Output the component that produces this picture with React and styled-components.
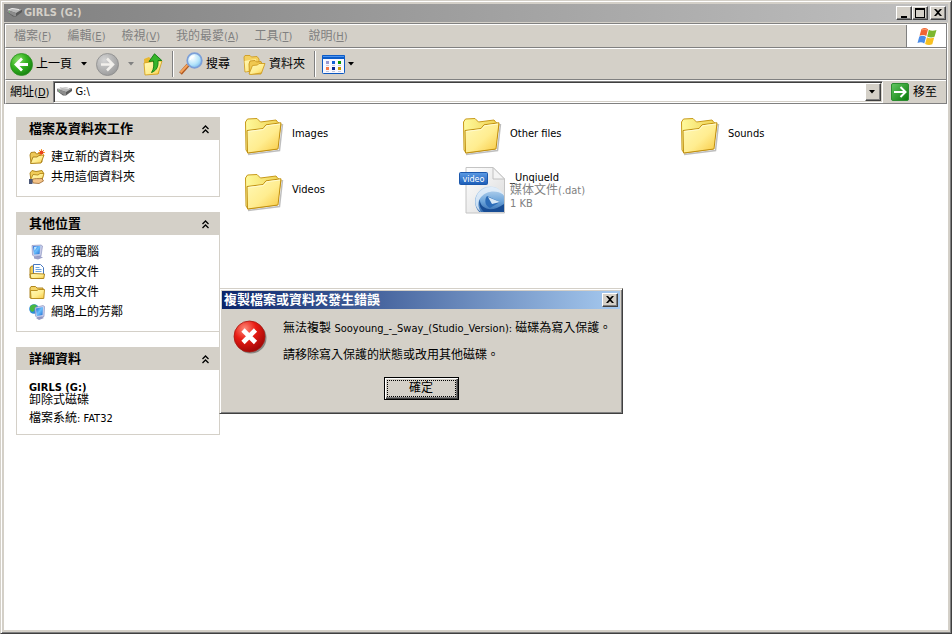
import React from 'react';
import styled, { createGlobalStyle, css } from 'styled-components';

const menus = [
  ['檔案', 'F'],
  ['編輯', 'E'],
  ['檢視', 'V'],
  ['我的最愛', 'A'],
  ['工具', 'T'],
  ['說明', 'H'],
];

const folders = ['Images', 'Other files', 'Sounds', 'Videos'];

const App = () => {
  return (
    <>
      <GlobalStyle />
      <Gradients />
      <Window lang="zh-Hant">
        <TitleBar>
          <DriveIcon />
          <WindowTitle>GIRLS (G:)</WindowTitle>
          <CaptionButtons>
            <CaptionButton aria-label="Minimize">
              <CaptionGlyph d="M3 9h6v2H3z" />
            </CaptionButton>
            <CaptionButton aria-label="Maximize">
              <CaptionGlyph d="M1 1h10v10H1zM2 3v7h8V3z" />
            </CaptionButton>
            <CaptionButton aria-label="Close" $spaced>
              <CaptionGlyph d={CROSS} />
            </CaptionButton>
          </CaptionButtons>
        </TitleBar>

        <Bars>
          <MenuRow>
            <Menu>
              {menus.map(([name, key]) => (
                <MenuButton key={key}>
                  {name}
                  <Latin>
                    (<u>{key}</u>)
                  </Latin>
                </MenuButton>
              ))}
            </Menu>
            <Brand>
              <FlagIcon />
            </Brand>
          </MenuRow>

          <ToolRow>
            <ToolButton>
              <BackIcon />
              上一頁
            </ToolButton>
            <DropButton aria-label="Back history">
              <DropArrow />
            </DropButton>
            <ToolButton aria-label="Forward">
              <ForwardIcon />
            </ToolButton>
            <DropButton aria-label="Forward history" $muted>
              <DropArrow />
            </DropButton>
            <ToolButton aria-label="Up">
              <UpIcon />
            </ToolButton>
            <Separator />
            <ToolButton>
              <SearchIcon />
              搜尋
            </ToolButton>
            <ToolButton $wide>
              <FoldersIcon />
              資料夾
            </ToolButton>
            <Separator />
            <ToolButton aria-label="Views">
              <ViewsIcon />
              <DropArrow />
            </ToolButton>
          </ToolRow>

          <AddressRow>
            <AddressLabel htmlFor="address">
              網址
              <Latin>
                (<u>D</u>)
              </Latin>
            </AddressLabel>
            <Combo>
              <DriveIcon />
              <AddressInput id="address" defaultValue="G:\" />
              <ComboButton aria-label="Address list">
                <DropArrow />
              </ComboButton>
            </Combo>
            <GoButton>
              <GoIcon />
              移至
            </GoButton>
          </AddressRow>
        </Bars>

        <Content>
          <Sidebar>
            <Panel title="檔案及資料夾工作">
              <Task icon={<NewFolderIcon />}>建立新的資料夾</Task>
              <Task icon={<ShareFolderIcon />}>共用這個資料夾</Task>
            </Panel>
            <Panel title="其他位置">
              <Task icon={<ComputerIcon />}>我的電腦</Task>
              <Task icon={<DocumentsIcon />}>我的文件</Task>
              <Task icon={<SmallFolderIcon />}>共用文件</Task>
              <Task icon={<NetworkIcon />}>網路上的芳鄰</Task>
            </Panel>
            <Panel title="詳細資料">
              <Details>
                <DriveName>GIRLS (G:)</DriveName>
                <DetailLine>卸除式磁碟</DetailLine>
                <DetailLine $spaced>
                  檔案系統<Latin>: FAT32</Latin>
                </DetailLine>
              </Details>
            </Panel>
          </Sidebar>

          <Files>
            {folders.map((name) => (
              <Tile key={name}>
                <FolderIcon />
                <FileName>{name}</FileName>
              </Tile>
            ))}
            <Tile>
              <VideoIcon />
              <FileInfo>
                <FileName>_UnqiueId</FileName>
                <FileMeta>
                  媒体文件<Latin>(.dat)</Latin>
                </FileMeta>
                <FileMeta>
                  <Latin>1 KB</Latin>
                </FileMeta>
              </FileInfo>
            </Tile>
          </Files>
        </Content>

        <Dialog role="alertdialog" aria-labelledby="dialog-title">
          <DialogTitleBar>
            <DialogTitle id="dialog-title">複製檔案或資料夾發生錯誤</DialogTitle>
            <CaptionButton aria-label="Close">
              <CaptionGlyph d={CROSS} />
            </CaptionButton>
          </DialogTitleBar>
          <DialogBody>
            <ErrorIcon />
            <Message>
              <p>
                無法複製 <Latin>Sooyoung_-_Sway_(Studio_Version): </Latin>
                磁碟為寫入保護。
              </p>
              <p>請移除寫入保護的狀態或改用其他磁碟。</p>
            </Message>
          </DialogBody>
          <DialogActions>
            <OkButton>
              <span>確定</span>
            </OkButton>
          </DialogActions>
        </Dialog>
      </Window>
    </>
  );
};

export default App;

const Panel = ({ title, children }) => (
  <PanelBox>
    <PanelHeader>
      {title}
      <svg width="9" height="9" viewBox="0 0 9 9" fill="none" stroke="#000">
        <path d="M1.5 4L4.5 1L7.5 4M1.5 8L4.5 5L7.5 8" strokeWidth="1.3" />
      </svg>
    </PanelHeader>
    <PanelBody>{children}</PanelBody>
  </PanelBox>
);

const Task = ({ icon, children }) => (
  <TaskLink href="#">
    {icon}
    {children}
  </TaskLink>
);

/* icons */

const CROSS = 'M2 2h2l2 2 2-2h2L7 5.500 10 9H8L6 7 4 9H2l3-3.500z';

const CaptionGlyph = ({ d }) => (
  <svg width="12" height="12" viewBox="0 0 12 12">
    <path d={d} fill="#000" fillRule="evenodd" />
  </svg>
);

const DropArrow = () => (
  <svg width="7" height="4" viewBox="0 0 7 4">
    <path d="M0 0h6L3 3.5z" fill="currentColor" />
  </svg>
);

const Gradients = () => (
  <HiddenSvg aria-hidden="true">
    <defs>
      <linearGradient id="folder" x1="0" y1="0" x2="1" y2="1">
        <stop offset="0" stopColor="#fff9b8" />
        <stop offset="0.55" stopColor="#ffed90" />
        <stop offset="1" stopColor="#f8c840" />
      </linearGradient>
      <linearGradient id="folderBack" x1="0" y1="0" x2="1" y2="0">
        <stop offset="0" stopColor="#fffa9c" />
        <stop offset="1" stopColor="#eed050" />
      </linearGradient>
      <radialGradient id="green" cx="0.35" cy="0.3" r="0.75">
        <stop offset="0" stopColor="#8be06a" />
        <stop offset="0.5" stopColor="#35b321" />
        <stop offset="1" stopColor="#158010" />
      </radialGradient>
      <radialGradient id="grey" cx="0.35" cy="0.3" r="0.8">
        <stop offset="0" stopColor="#d4d4d4" />
        <stop offset="1" stopColor="#979797" />
      </radialGradient>
      <radialGradient id="red" cx="0.35" cy="0.25" r="0.8">
        <stop offset="0" stopColor="#ff8a78" />
        <stop offset="0.45" stopColor="#e81c14" />
        <stop offset="1" stopColor="#9c0606" />
      </radialGradient>
      <radialGradient id="lens" cx="0.35" cy="0.3" r="0.8">
        <stop offset="0" stopColor="#ffffff" />
        <stop offset="0.6" stopColor="#b4e4fa" />
        <stop offset="1" stopColor="#6cb4ec" />
      </radialGradient>
      <linearGradient id="screen" x1="0" y1="0" x2="1" y2="1">
        <stop offset="0" stopColor="#1c64dc" />
        <stop offset="0.5" stopColor="#6cc0fc" />
        <stop offset="1" stopColor="#1c68d0" />
      </linearGradient>
      <linearGradient id="page" x1="0" y1="0" x2="1" y2="1">
        <stop offset="0" stopColor="#ffffff" />
        <stop offset="1" stopColor="#dadada" />
      </linearGradient>
      <linearGradient id="orb" x1="0" y1="0" x2="0" y2="1">
        <stop offset="0" stopColor="#c4dcf2" />
        <stop offset="0.5" stopColor="#6ca4da" />
        <stop offset="1" stopColor="#1c549c" />
      </linearGradient>
      <linearGradient id="tag" x1="0" y1="0" x2="0" y2="1">
        <stop offset="0" stopColor="#5c9be4" />
        <stop offset="1" stopColor="#1b5db8" />
      </linearGradient>
      <linearGradient id="go" x1="0" y1="0" x2="1" y2="1">
        <stop offset="0" stopColor="#62c862" />
        <stop offset="1" stopColor="#087808" />
      </linearGradient>
    </defs>
  </HiddenSvg>
);

const DriveIcon = () => (
  <svg width="16" height="16" viewBox="0 0 16 16">
    <path d="M1 5L6 3L16 4.500V7L10 11.500L7 11.500L1 7z" fill="#5a5a5a" />
    <path d="M1 5L6 3L16 4.500L10 8z" fill="#b8b8b8" />
    <path d="M1 5L10 8V11H8L1 7z" fill="#8c8c8c" />
    <path d="M2 5L6 3.500L13 4.500" stroke="#e8e8e8" fill="none" />
    <path d="M3 7h1" stroke="#6ad06a" />
  </svg>
);

const FlagIcon = () => (
  <svg width="20" height="19" viewBox="0 0 20 19">
    <path d="M4.500 2C7 .5 9 1 11 2.300L9.300 9C7.500 7.800 5 7.600 2.500 8.800z" fill="#f06432" />
    <path d="M11.800 2.800C14 4 16.500 4 19.500 3L17.500 9.700C15 10.700 12.500 10.600 10.200 9.400z" fill="#7cb82e" />
    <path d="M2.300 9.600C4.500 8.400 7 8.600 9 9.900L7.300 16.500C5.200 15 3 15 .5 16z" fill="#4a8ce8" />
    <path d="M9.900 10.300C12 11.500 14.500 11.700 17.200 10.600L15.300 17.200C12.800 18.300 10.300 18 8.100 16.900z" fill="#f8c020" />
    <path d="M5 3C7 2 8.500 2.300 10 3" stroke="#f8a070" fill="none" />
  </svg>
);

const BackIcon = () => (
  <svg width="23" height="23" viewBox="0 0 23 23">
    <circle cx="11.500" cy="11.500" r="11" fill="url(#green)" stroke="#2c8f20" strokeWidth="0.8" />
    <path d="M12 5.500L6 11.500L12 17.500M6.500 11.500H18" stroke="#fff" strokeWidth="2.800" fill="none" />
  </svg>
);

const ForwardIcon = () => (
  <svg width="23" height="23" viewBox="0 0 23 23">
    <circle cx="11.500" cy="11.500" r="11" fill="url(#grey)" stroke="#8a8a8a" strokeWidth="0.8" />
    <path d="M11 5.500L17 11.500L11 17.500M16.500 11.500H5" stroke="#f2f0ec" strokeWidth="2.500" fill="none" />
  </svg>
);

const UpIcon = () => (
  <svg width="20" height="23" viewBox="0 0 20 23">
    <path d="M1 6L6 4L8 6L17 8L16 21L2 22z" fill="#e8b830" />
    <path d="M1 10L13 8L19 8L15 21L2 22z" fill="url(#folder)" stroke="#d09c18" strokeWidth="0.8" />
    <path d="M11.500 .8L18.800 7.500H15C15.500 13 14 17.500 8.500 19.500C11 16 11 12 10.500 8L6 8.500z" fill="#36b52a" stroke="#127a10" strokeWidth="0.9" />
  </svg>
);

const SearchIcon = () => (
  <svg width="24" height="24" viewBox="0 0 24 24">
    <path d="M9 13L1.500 21.500" stroke="#b05820" strokeWidth="3.600" />
    <path d="M8.500 13L1.500 20.500" stroke="#f4a45c" strokeWidth="2" />
    <circle cx="15.500" cy="8.500" r="7.300" fill="url(#lens)" stroke="#7c9fd8" strokeWidth="1.700" />
    <path d="M11 8C11.500 5.500 13 4.200 15.500 4" stroke="#fff" strokeWidth="1.500" fill="none" />
  </svg>
);

const FoldersIcon = () => (
  <svg width="23" height="21" viewBox="0 0 23 21">
    <path d="M1 3L2 1.500H7L8.500 3L14 2.500L16 5V16L2 18z" fill="#f4d060" stroke="#cf9c20" strokeWidth="0.900" />
    <path d="M1.500 7L13 5L12 16L2.500 17.500z" fill="url(#folder)" />
    <path d="M6 10L7 7L12 6.500L13.500 8L18 7.500L19 10L18 20H6.500z" fill="#f0c850" stroke="#c89420" strokeWidth="0.900" />
    <path d="M6 20L9.500 11.500L14.500 11L16 9.500H22L18.500 19L8 20.500z" fill="url(#folder)" stroke="#cf9c20" strokeWidth="0.900" />
  </svg>
);

const ViewsIcon = () => (
  <svg width="24" height="19" viewBox="-1 0 24 19">
    <rect x="0.500" y="0.500" width="22" height="18" rx="1" fill="#f8f8ff" stroke="#0c58c0" />
    <rect x="0" y="0" width="23" height="4" rx="1" fill="#0c5cc8" />
    <rect x="1" y="1" width="21" height="1" fill="#4c94f0" />
    <path d="M4 6h3v3h-3z" fill="#9898d0" />
    <path d="M10 6h3v3h-3z" fill="#1060d8" />
    <path d="M16 6h3v3h-3z" fill="#089808" />
    <path d="M4 12h3v3h-3z" fill="#f87848" />
    <path d="M10 12h3v3h-3z" fill="#082890" />
    <path d="M16 12h3v3h-3z" fill="#c89808" />
    <path d="M4 10.500h3M10 10.500h3M16 10.500h3M4 16.500h3M10 16.500h3M16 16.500h3" stroke="#c8c8d8" />
  </svg>
);

const GoIcon = () => (
  <svg width="18" height="18" viewBox="0 0 18 18">
    <rect x="0.500" y="0.500" width="17" height="17" rx="1.500" fill="url(#go)" stroke="#2c8c30" />
    <path d="M9.500 4L14.500 9L9.500 14M14 9H3" stroke="#fff" strokeWidth="2" fill="none" />
  </svg>
);

const SmallFolderIcon = () => (
  <svg width="16" height="16" viewBox="0 0 16 16">
    <path d="M1 4L2 2.500H6.500L8 4H14V14H1z" fill="#f4d468" stroke="#a87c10" strokeWidth="0.900" />
    <path d="M1.500 6.500H8L9.500 5.500H15.500L14.800 14.500H2z" fill="url(#folder)" stroke="#b48818" strokeWidth="0.900" />
  </svg>
);

const NewFolderIcon = () => (
  <svg width="16" height="16" viewBox="0 0 16 16">
    <path d="M1 6L2 3.500L6 3L7.500 5L12 4L13 13L2 14z" fill="#eec858" stroke="#a87c10" strokeWidth="0.900" />
    <path d="M1.500 14.500L4 8H8L10 6.500L15 6L12 14z" fill="url(#folder)" stroke="#a87c10" strokeWidth="0.900" />
    <path d="M12.500 0v7M9 3.500h7M10 1l5 5M15 1l-5 5" stroke="#f8a038" />
    <circle cx="12.500" cy="3.500" r="2" fill="#e8401c" />
  </svg>
);

const ShareFolderIcon = () => (
  <svg width="16" height="16" viewBox="0 0 16 16">
    <path d="M1 4L3 1.500L7 2.500L13 1.500L14.500 4L13 12H2z" fill="#f0cc58" stroke="#a87c10" strokeWidth="0.900" />
    <path d="M2 10L4 5.500L9 6L11 4.500H15L12.500 12L3 12z" fill="url(#folder)" stroke="#b48818" strokeWidth="0.900" />
    <path d="M3 10.500C6 9 9 10 13 9.500L14.500 12L10 14.500L4 14z" fill="#f4c488" stroke="#9c6830" strokeWidth="0.800" />
    <path d="M0 10h3.500v5H0z" fill="#4c5878" />
  </svg>
);

const ComputerIcon = () => (
  <svg width="16" height="16" viewBox="0 0 16 16">
    <path d="M5 13L10 11.500L14 13.500L9 15.500L5 14.500z" fill="#9ca0c8" />
    <path d="M3 1.500L12 1L13.500 2L12 12L5 12.500L3.500 11z" fill="#c8cce8" stroke="#8088b8" strokeWidth="0.600" />
    <path d="M4 2.300L11.300 2L10.500 10L5 10.500z" fill="url(#screen)" />
    <path d="M5 3l3-.2-2.500 4z" fill="#c0e8ff" />
  </svg>
);

const DocumentsIcon = () => (
  <svg width="16" height="16" viewBox="0 0 16 16">
    <path d="M1 4L2.500 2H5V14H1z" fill="#f0cc58" stroke="#a87c10" strokeWidth="0.900" />
    <path d="M4.500 .5H11.500L14.500 3.500V12H4.500z" fill="#fff" stroke="#4878c0" />
    <path d="M6.500 3.500h4M6.500 5.500h6M6.500 7.500h6" stroke="#6ca4e0" />
    <path d="M1 10L4 9.500L15.500 10L14.800 14.500H2z" fill="url(#folder)" stroke="#a87c10" strokeWidth="0.900" />
  </svg>
);

const NetworkIcon = () => (
  <svg width="16" height="16" viewBox="0 0 16 16">
    <circle cx="5" cy="5" r="4.800" fill="#2c8cd8" />
    <path d="M1 3C3 0 6 0 8 2L6 4L5 7L3 8L1 6z" fill="#48b840" />
    <path d="M7 14L12 12L15 14L10 16z" fill="#9498c4" />
    <path d="M6 3.500L14 1.500L15.600 2.500L15 12.500L8 13.500L6.500 12z" fill="#ccd0ec" stroke="#8088b8" strokeWidth="0.600" />
    <path d="M7 4.500L14 3L13.500 11L7.800 12z" fill="url(#screen)" />
  </svg>
);

const FolderIcon = () => (
  <svg width="48" height="48" viewBox="0 0 48 48">
    <path d="M9 44.500L40.500 40.500L43.500 14" fill="none" stroke="#888" strokeWidth="1.500" opacity="0.550" />
    <path d="M6.500 12L8.500 9L18 8.500L21.500 12L37 10L39 12.500L42 14L38 39L9 43L7 40z" fill="url(#folderBack)" stroke="#c89a1c" />
    <path d="M8 20.500L24 18.500L27 14.800L42 12.800L39 39L8.500 43z" fill="url(#folder)" stroke="#c08f10" />
    <path d="M9 21.500L24.500 19.500L27.500 15.800L41 14" fill="none" stroke="#fffbd0" />
  </svg>
);

const VideoIcon = () => (
  <svg width="48" height="48" viewBox="0 0 48 48">
    <path d="M9 1.500H36L47.500 13V47H9z" fill="url(#page)" stroke="#c4c4c4" />
    <path d="M36 1.500V13H47.500z" fill="#f4f4f4" stroke="#c0c0c0" />
    <clipPath id="sheet">
      <path d="M9 2H47V46H9z" />
    </clipPath>
    <g clipPath="url(#sheet)">
      <circle cx="33" cy="35.500" r="15" fill="url(#orb)" />
      <path d="M20 29C26 19 41 18 47 29C39 23 29 25 24 31C20 36 21 41 24 46C18 42 17 35 20 29z" fill="#eaf3fb" opacity="0.800" />
      <path d="M30 30L43 36L33 42C28 40 27 34 30 30z" fill="#2c6cb8" />
      <path d="M31 31L43 36L35 38z" fill="#d8e8f6" />
      <path d="M23 33C22 42 34 48 47 38V47H28C23 43 21 38 23 33z" fill="#174c94" />
    </g>
    <rect x="2.500" y="6.500" width="28" height="12" rx="1" fill="url(#tag)" stroke="#1c58ac" />
    <text x="16.500" y="16" fill="#fff" fontSize="9" textAnchor="middle">
      video
    </text>
  </svg>
);

const ErrorIcon = () => (
  <svg width="34" height="34" viewBox="0 0 34 34">
    <circle cx="18" cy="18" r="15.500" fill="#555" opacity="0.600" />
    <circle cx="16.500" cy="16.500" r="15.500" fill="url(#red)" stroke="#a81810" strokeWidth="0.800" />
    <path d="M10 10L22.500 22.500M22.500 10L10 22.500" stroke="#fff" strokeWidth="4.600" />
  </svg>
);

/* styles */

const GlobalStyle = createGlobalStyle`
  * {
    box-sizing: border-box;
  }
  body {
    margin: 0;
    color: #000;
    font: 12px/16px "DejaVu Sans Condensed", "Noto Sans CJK TC", sans-serif;
  }
  button, input {
    margin: 0;
    padding: 0;
    border: 0;
    color: inherit;
    background: none;
    font: inherit;
  }
  p {
    margin: 0;
  }
  svg {
    flex: none;
    display: block;
  }
`;

const raised = css`
  border: 1px solid;
  border-color: #fff #404040 #404040 #fff;
  box-shadow: inset -1px -1px #808080;
  background: #d4d0c8;
`;

const frame = css`
  border: 1px solid;
  border-color: #d4d0c8 #404040 #404040 #d4d0c8;
  box-shadow: inset 1px 1px #fff, inset -1px -1px #808080;
  background: #d4d0c8;
`;

const HiddenSvg = styled.svg`
  position: absolute;
  width: 0;
  height: 0;
`;

const Latin = styled.span`
  font-size: 11px;
  white-space: pre;
`;

const Window = styled.div`
  ${frame}
  position: relative;
  min-height: 100vh;
  padding: 3px;
  display: flex;
  flex-direction: column;
`;

const TitleBar = styled.header`
  height: 18px;
  padding: 0 2px;
  display: flex;
  align-items: center;
  gap: 2px;
  color: #d4d0c8;
  background: linear-gradient(to right, #808080, #c0c0c0);
`;

const WindowTitle = styled.h1`
  flex: 1;
  margin: 0;
  font-size: 11px;
  font-weight: bold;
`;

const CaptionButtons = styled.div`
  display: flex;
`;

const CaptionButton = styled.button`
  ${raised}
  width: 16px;
  height: 14px;
  margin-left: ${(props) => (props.$spaced ? '2px' : '0')};
  display: flex;
  align-items: center;
  justify-content: center;
`;

const Bars = styled.div`
  margin: 1px 1px 0 0;
  border: 1px solid #808080;
  border-bottom: 0;
  box-shadow: 1px 0 #fff;
`;

const BarRow = styled.div`
  display: flex;
  align-items: center;
  border-top: 1px solid #fff;
  border-left: 1px solid #fff;
  border-bottom: 1px solid #808080;
`;

const MenuRow = styled(BarRow)`
  height: 24px;
  align-items: stretch;
`;

const Menu = styled.nav`
  flex: 1;
  display: flex;
  border-right: 1px solid #808080;
`;

const MenuButton = styled.button`
  padding: 0 8px;
  color: #808080;
`;

const Brand = styled.div`
  width: 39px;
  display: flex;
  align-items: center;
  justify-content: center;
  background: #fff;
`;

const ToolRow = styled(BarRow)`
  height: 32px;
  padding-left: 4px;
`;

const ToolButton = styled.button`
  display: flex;
  align-items: center;
  gap: 3px;
  padding-right: 1px;
  margin-left: ${(props) => (props.$wide ? '12px' : '0')};
`;

const DropButton = styled.button`
  height: 22px;
  padding: 0 8px;
  color: ${(props) => (props.$muted ? '#808080' : '#000')};
`;

const Separator = styled.div`
  width: 2px;
  height: 26px;
  margin: 0 5px 0 8px;
  border-left: 1px solid #808080;
  border-right: 1px solid #fff;
`;

const AddressRow = styled(BarRow)`
  height: 24px;
  padding-left: 4px;
`;

const AddressLabel = styled.label`
  margin-right: 4px;
`;

const Combo = styled.div`
  flex: 1;
  height: 22px;
  padding: 1px 1px 1px 2px;
  display: flex;
  align-items: center;
  gap: 3px;
  border: 1px solid;
  border-color: #808080 #fff #fff #808080;
  box-shadow: inset 1px 1px #404040, inset -1px -1px #d4d0c8;
  background: #fff;
`;

const AddressInput = styled.input`
  flex: 1;
  min-width: 0;
  font-size: 11px;
  outline: 0;
`;

const ComboButton = styled.button`
  ${raised}
  width: 16px;
  height: 18px;
  display: flex;
  align-items: center;
  justify-content: center;
`;

const GoButton = styled.button`
  margin-left: 8px;
  padding-right: 9px;
  display: flex;
  align-items: center;
  gap: 4px;
`;

const Content = styled.main`
  flex: 1;
  display: flex;
  background: #fff;
`;

const Sidebar = styled.aside`
  width: 216px;
  flex: none;
  padding: 13px 0 13px 12px;
  display: flex;
  flex-direction: column;
  gap: 15px;
`;

const PanelBox = styled.section`
  border: 1px solid #d4d0c8;
`;

const PanelHeader = styled.button`
  width: 100%;
  height: 22px;
  padding: 0 9px 0 12px;
  display: flex;
  align-items: center;
  justify-content: space-between;
  background: #d4d0c8;
  font-size: 13px;
  font-weight: bold;
`;

const PanelBody = styled.div`
  padding: 7px 12px 9px;
`;

const TaskLink = styled.a`
  height: 20px;
  display: flex;
  align-items: center;
  gap: 6px;
  color: #000;
  text-decoration: none;
`;

const Details = styled.div`
  padding-top: 4px;
  line-height: 13px;
`;

const DriveName = styled.p`
  font-size: 11px;
  font-weight: bold;
`;

const DetailLine = styled.p`
  margin-top: ${(props) => (props.$spaced ? '5px' : '0')};
`;

const Files = styled.div`
  flex: 1;
  padding: 6px 0 0 19px;
  display: grid;
  grid-template-columns: repeat(auto-fill, 218px);
  grid-auto-rows: 48px;
  gap: 8px 0;
`;

const Tile = styled.div`
  display: flex;
  align-items: center;
  gap: 5px;
`;

const FileInfo = styled.div`
  line-height: 13px;
`;

const FileName = styled.p`
  font-size: 11px;
`;

const FileMeta = styled.p`
  color: #808080;
`;

const Dialog = styled.div`
  ${frame}
  position: absolute;
  top: 287px;
  left: 218px;
  min-height: 126px;
  padding: 2px;
`;

const DialogTitleBar = styled.div`
  height: 18px;
  padding: 0 2px;
  display: flex;
  align-items: center;
  justify-content: space-between;
  background: linear-gradient(to right, #0a246a, #a6caf0);
`;

const DialogTitle = styled.h2`
  margin: 0;
  color: #fff;
  font-size: 13px;
  font-weight: bold;
`;

const DialogBody = styled.div`
  padding: 11px 9px 0 11px;
  display: flex;
  gap: 16px;
`;

const Message = styled.div`
  display: grid;
  gap: 10px;
  white-space: nowrap;
`;

const DialogActions = styled.div`
  padding: 14px 0 11px;
  display: flex;
  justify-content: center;
`;

const OkButton = styled.button`
  width: 75px;
  height: 23px;
  padding: 2px;
  border: 1px solid #000;
  background: #d4d0c8;
  box-shadow: inset 1px 1px #fff, inset -1px -1px #404040, inset -2px -2px #808080;
  & span {
    display: block;
    border: 1px dotted #000;
    line-height: 15px;
  }
`;
